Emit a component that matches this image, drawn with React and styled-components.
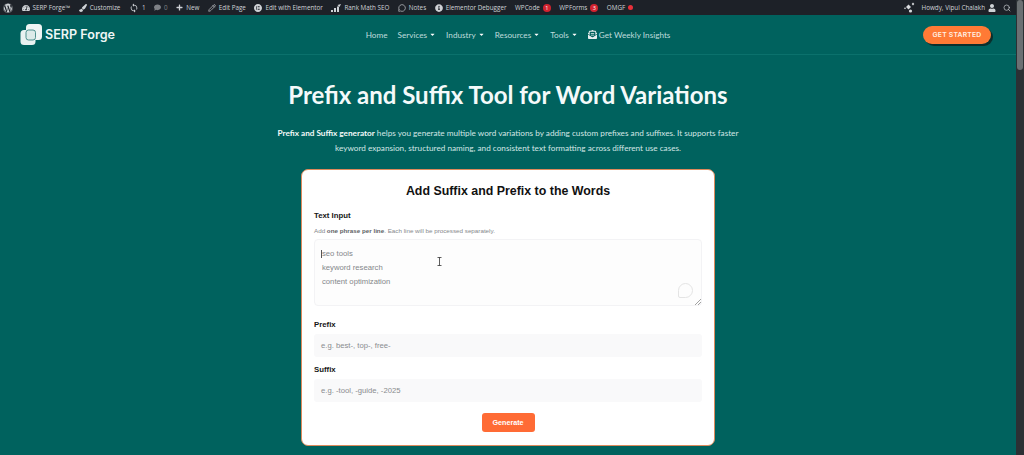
import React from 'react';
import styled, { createGlobalStyle } from 'styled-components';
import { FaWordpress, FaTachometerAlt, FaComment, FaPlus, FaCaretDown, FaEnvelopeOpenText, FaUser, FaPaintBrush, FaInfoCircle } from 'react-icons/fa';
import { MdSync } from 'react-icons/md';
import { SiElementor } from 'react-icons/si';
import { Pencil, MessageCircle, Search } from 'lucide-react';

const GlobalStyle = createGlobalStyle`
  html, body {
    margin: 0;
    height: 100%;
    overflow: hidden;
    background: #00625e;
  }
  * {
    box-sizing: border-box;
  }
`;

const leftItems = [
  { icon: <FaWordpress size={10} /> },
  { icon: <FaTachometerAlt size={8} />, text: 'SERP Forge™' },
  { icon: <FaPaintBrush size={8} />, text: 'Customize' },
  { icon: <MdSync size={10} />, text: '1' },
  { icon: <FaComment size={7} />, text: '0', dim: true },
  { icon: <FaPlus size={7} />, text: 'New' },
  { icon: <Pencil size={8} />, text: 'Edit Page' },
  { icon: <SiElementor size={8} />, text: 'Edit with Elementor' },
  { icon: <RankIcon />, text: 'Rank Math SEO' },
  { icon: <MessageCircle size={8} />, text: 'Notes' },
  { icon: <FaInfoCircle size={8} />, text: 'Elementor Debugger' },
  { text: 'WPCode', badge: '1' },
  { text: 'WPForms', badge: '3' },
  { text: 'OMGF', dot: true },
];

const navItems = [
  { text: 'Home' },
  { text: 'Services', caret: true },
  { text: 'Industry', caret: true },
  { text: 'Resources', caret: true },
  { text: 'Tools', caret: true },
  { text: 'Get Weekly Insights', icon: true },
];

function RankIcon() {
  return (
    <svg width="10" height="8" viewBox="0 0 10 8" fill="currentColor">
      <path d="M0 8V6h2v2zM3 8V4h2v4zM6 8V2.5h2V8zM8.5 3 L10 0 L6.5 1z" />
    </svg>
  );
}

function LogoMark() {
  return (
    <svg width="23" height="23" viewBox="0 0 23 23">
      <rect x="6" y="1" width="16" height="16" rx="3.5" fill="#eef5f4" />
      <rect x="0.5" y="7" width="15" height="15" rx="3.5" fill="#e9f2f1" />
      <rect x="6" y="7" width="9.5" height="10" rx="2.5" fill="#dcebe9" stroke="#3d8783" strokeWidth="0.9" />
    </svg>
  );
}

function SparkleCluster() {
  return (
    <svg width="11" height="11" viewBox="0 0 11 11" fill="#d8dadd">
      <path d="M4.5 2.5 L7 5 L4.5 7.5 L2 5z" />
      <path d="M9 0.5 L10.3 2 L9 3.5 L7.7 2z" />
      <path d="M1 5.2 L2 6.2 L1 7.2 L0 6.2z" />
      <circle cx="6.5" cy="9" r="1.6" />
    </svg>
  );
}

const App = () => {
  return (
    <Page>
      <GlobalStyle />
      <Main>
        <AdminBar>
          <AdminGroup>
            {leftItems.map((item, i) => (
              <AdminItem key={i} $dim={item.dim}>
                {item.icon}
                {item.text && <span>{item.text}</span>}
                {item.badge && <Badge>{item.badge}</Badge>}
                {item.dot && <Dot />}
              </AdminItem>
            ))}
          </AdminGroup>
          <AdminRight>
            <SparkleCluster />
            <AdminItem>
              <span>Howdy, Vipul Chalakh</span>
              <FaUser size={8} />
            </AdminItem>
            <Search size={8} />
          </AdminRight>
        </AdminBar>
        <Header>
          <Logo>
            <LogoMark />
            <LogoText>SERP Forge</LogoText>
          </Logo>
          <Nav>
            {navItems.map((item) => (
              <NavLink key={item.text}>
                {item.icon && <FaEnvelopeOpenText size={9} color="#e8eef0" />}
                {item.text}
                {item.caret && <FaCaretDown size={7} color="#ffffff" />}
              </NavLink>
            ))}
          </Nav>
          <StartButton>GET STARTED</StartButton>
        </Header>
        <Content>
          <Title>Prefix and Suffix Tool for Word Variations</Title>
          <Intro>
            <strong>Prefix and Suffix generator</strong> helps you generate multiple word variations by adding custom prefixes and suffixes. It supports faster
            <br />
            keyword expansion, structured naming, and consistent text formatting across different use cases.
          </Intro>
          <Card>
            <CardTitle>Add Suffix and Prefix to the Words</CardTitle>
            <FieldLabel $top={12}>Text Input</FieldLabel>
            <Help>
              Add <b>one phrase per line</b>. Each line will be processed separately.
            </Help>
            <AreaBox>
              <Caret />
              <AreaLine>seo tools</AreaLine>
              <AreaLine>keyword research</AreaLine>
              <AreaLine>content optimization</AreaLine>
              <Bubble />
              <Grip viewBox="0 0 6 6" width="6" height="6">
                <path d="M0 6 L6 0 M3 6 L6 3" stroke="#8a8a8a" strokeWidth="0.8" />
              </Grip>
              <Cursor viewBox="0 0 5 9" width="5" height="9">
                <path d="M0.5 0.5h4M0.5 8.5h4M2.5 0.5v8" stroke="#333" strokeWidth="0.8" fill="none" />
              </Cursor>
            </AreaBox>
            <FieldLabel $top={14}>Prefix</FieldLabel>
            <InputBox>e.g. best-, top-, free-</InputBox>
            <FieldLabel $top={7.5}>Suffix</FieldLabel>
            <InputBox>e.g. -tool, -guide, -2025</InputBox>
            <GenerateButton>Generate</GenerateButton>
          </Card>
        </Content>
      </Main>
      <Scrollbar>
        <ScrollThumb />
      </Scrollbar>
    </Page>
  );
};

const Page = styled.div`
  display: flex;
  width: 1024px;
  height: 455px;
  overflow: hidden;
  font-family: 'Lato', 'Open Sans', sans-serif;
`;

const Main = styled.div`
  flex: 1;
  min-width: 0;
  display: flex;
  flex-direction: column;
`;

const AdminBar = styled.div`
  flex: none;
  height: 15px;
  background: #1d2128;
  color: #cfd2d6;
  display: flex;
  align-items: center;
  justify-content: space-between;
  padding: 0 5px 0 3px;
  font-family: 'Open Sans', sans-serif;
  font-size: 6.3px;
`;

const AdminGroup = styled.div`
  display: flex;
  align-items: center;
  gap: 8.5px;
`;

const AdminRight = styled(AdminGroup)`
  gap: 7px;
`;

const AdminItem = styled.div`
  display: flex;
  align-items: center;
  gap: 3px;
  white-space: nowrap;
  color: ${(p) => (p.$dim ? '#7e8186' : '#cfd2d6')};
`;

const Badge = styled.span`
  width: 8px;
  height: 8px;
  border-radius: 50%;
  background: #d2232f;
  color: #fff;
  font-size: 5.5px;
  line-height: 8px;
  text-align: center;
`;

const Dot = styled.span`
  width: 5px;
  height: 5px;
  border-radius: 50%;
  background: #e8303a;
`;

const Header = styled.header`
  flex: none;
  height: 40px;
  display: flex;
  align-items: center;
  justify-content: space-between;
  padding: 0 25px 0 20px;
  border-bottom: 1px solid #0b716c;
`;

const Logo = styled.div`
  display: flex;
  align-items: center;
  gap: 2px;
`;

const LogoText = styled.span`
  color: #eef6f5;
  font-family: 'Inter', sans-serif;
  font-size: 12.6px;
  font-weight: 600;
`;

const Nav = styled.nav`
  display: flex;
  align-items: center;
  gap: 10px;
  margin-right: 2px;
`;

const NavLink = styled.a`
  display: flex;
  align-items: center;
  gap: 2px;
  color: #bfdcdc;
  font-size: 8.2px;
  white-space: nowrap;
`;

const StartButton = styled.button`
  width: 68px;
  height: 18px;
  border: none;
  border-radius: 9px;
  background: #ff7a35;
  color: #fff0e4;
  font-family: 'Inter', sans-serif;
  font-size: 6.8px;
  font-weight: 600;
  letter-spacing: 0.2px;
  padding: 0;
  box-shadow: 2px 2px 0 #0a2f2d;
`;

const Content = styled.main`
  flex: 1;
  min-height: 0;
  display: flex;
  flex-direction: column;
  align-items: center;
`;

const Title = styled.h1`
  margin: 25px 0 0;
  color: #f4fafa;
  font-size: 24px;
  line-height: 30px;
  font-weight: 700;
  white-space: nowrap;
`;

const Intro = styled.p`
  margin: 16px 0 0;
  color: #d4e6e5;
  font-size: 8.2px;
  line-height: 14.5px;
  text-align: center;
  white-space: nowrap;

  strong {
    color: #f4fafa;
  }
`;

const Card = styled.section`
  flex: none;
  width: 414px;
  height: 277px;
  margin-top: 14px;
  padding: 13px 12px 0;
  display: flex;
  flex-direction: column;
  background: #fff;
  border: 1px solid #dd8a5c;
  border-radius: 7px;
  font-family: 'Liberation Sans', Arial, sans-serif;
`;

const CardTitle = styled.h2`
  margin: 0;
  color: #111;
  font-size: 12.4px;
  line-height: 16px;
  font-weight: 700;
  text-align: center;
`;

const FieldLabel = styled.label`
  margin-top: ${(p) => p.$top ?? 13}px;
  color: #161616;
  font-size: 7.8px;
  line-height: 10px;
  font-weight: 700;
`;

const Help = styled.div`
  margin-top: 6px;
  color: #85888c;
  font-size: 6.25px;
  line-height: 8px;

  b {
    color: #5e6165;
  }
`;

const AreaBox = styled.div`
  position: relative;
  height: 67px;
  margin-top: 4px;
  padding: 7px;
  background: #fdfdfd;
  border: 1px solid #f3f3f5;
  border-radius: 4px;
`;

const AreaLine = styled.div`
  color: #84878a;
  font-size: 7.7px;
  line-height: 14.2px;
`;

const Caret = styled.span`
  position: absolute;
  left: 6px;
  top: 10px;
  width: 1px;
  height: 8px;
  background: #555;
`;

const Cursor = styled.svg`
  position: absolute;
  left: 122px;
  top: 17px;
`;

const Bubble = styled.span`
  position: absolute;
  right: 8px;
  bottom: 7px;
  width: 15px;
  height: 15px;
  border: 1px solid #e4e4e4;
  border-radius: 50% 50% 50% 2px;
`;

const Grip = styled.svg`
  position: absolute;
  right: 0;
  bottom: 0;
`;

const InputBox = styled.div`
  height: 23px;
  margin-top: 4px;
  padding: 0 7px;
  display: flex;
  align-items: center;
  background: #f9f9fa;
  border-radius: 3px;
  color: #898c8f;
  font-size: 7.7px;
`;

const GenerateButton = styled.button`
  align-self: center;
  width: 53px;
  height: 19px;
  margin-top: 11px;
  padding: 0;
  border: none;
  border-radius: 3px;
  background: #ff6b35;
  color: #fff;
  font-family: 'Liberation Sans', Arial, sans-serif;
  font-size: 7.2px;
  font-weight: 700;
`;

const Scrollbar = styled.div`
  flex: none;
  width: 8px;
  background: #2b3034;
  padding: 0 1px;
`;

const ScrollThumb = styled.div`
  height: 70px;
  background: #6b7073;
  border-radius: 3px;
`;

export default App;
